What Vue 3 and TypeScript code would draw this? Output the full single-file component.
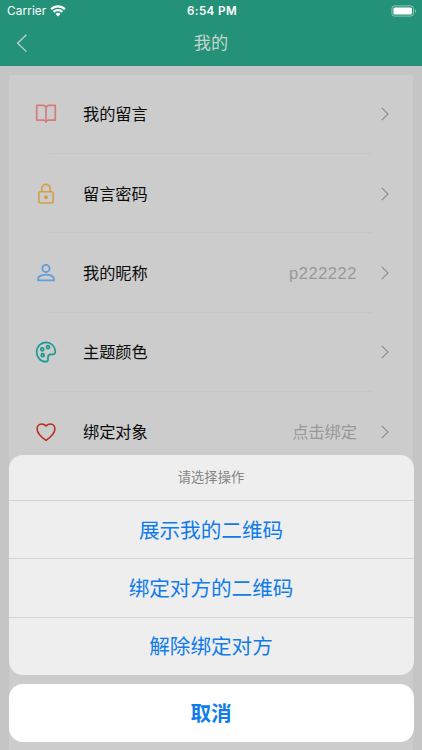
<script setup lang="ts">
interface Row {
  icon: 'book' | 'lock' | 'user' | 'palette' | 'heart'
  label: string
  value?: string
}

const rows: Row[] = [
  { icon: 'book', label: '我的留言' },
  { icon: 'lock', label: '留言密码' },
  { icon: 'user', label: '我的昵称', value: 'p222222' },
  { icon: 'palette', label: '主题颜色' },
  { icon: 'heart', label: '绑定对象', value: '点击绑定' },
]

const actions: string[] = ['展示我的二维码', '绑定对方的二维码', '解除绑定对方']
</script>

<template>
  <div class="screen">
    <header class="header">
      <div class="status">
        <div class="carrier">
          <span>Carrier</span>
          <svg class="wifi" viewBox="0 0 16 12" width="16" height="12">
            <path d="M1.1 4.3a9.8 9.8 0 0 1 13.8 0M3.6 6.9a6.3 6.3 0 0 1 8.8 0" fill="none" stroke="#fff" stroke-width="2.2" />
            <path d="M5.5 8.9a3.6 3.6 0 0 1 5 0L8 11.6z" fill="#fff" />
          </svg>
        </div>
        <span class="time">6:54 PM</span>
        <div class="battery">
          <svg viewBox="0 0 26 12" width="26" height="12">
            <rect x="0.9" y="0.9" width="21.6" height="10.2" rx="2.8" fill="none" stroke="#8fc6b5" />
            <rect x="2.4" y="2.4" width="18.6" height="7.2" rx="1.5" fill="#fff" />
            <path d="M24 4.2v3.6c1.4-.5 1.4-3.1 0-3.6z" fill="#8fc6b5" />
          </svg>
        </div>
      </div>
      <nav class="nav">
        <svg class="back" viewBox="0 0 12 20" width="12" height="20">
          <path d="M10.4 1.8 1.6 10.2l8.8 8.4" fill="none" stroke="#c5d5ce" stroke-width="1.2" />
        </svg>
        <h1>我的</h1>
      </nav>
    </header>

    <main class="card">
      <div v-for="row in rows" :key="row.label" class="row">
        <svg class="icon" viewBox="0 0 22 22" width="22" height="22" fill="none">
          <g v-if="row.icon === 'book'" stroke="#d57b7a" stroke-width="1.7" stroke-linejoin="round">
            <path d="M11 4.2C10.3 3 9.3 2.4 8 2.4H1.7v14.7h6.8c1.3 0 2.1.4 2.5 1.3.4-.9 1.2-1.3 2.5-1.3h6.8V2.4H14c-1.3 0-2.3.6-3 1.8z" />
            <path d="M11 4.2v15.6" />
          </g>
          <g v-else-if="row.icon === 'lock'" stroke="#d59d48" stroke-width="1.6">
            <rect x="3.9" y="8.8" width="14.2" height="11.2" rx="1.3" />
            <path d="M6.8 8.8V5.6a4.2 4.2 0 0 1 8.4 0v3.2" />
            <circle cx="11" cy="14.2" r="2" fill="#d59d48" stroke="none" />
          </g>
          <g v-else-if="row.icon === 'user'" stroke="#5f9fd5" stroke-width="1.8">
            <circle cx="11" cy="6.4" r="3.6" />
            <path d="M3.2 18.3v-1.8c0-2.5 4.8-3.8 7.8-3.8s7.8 1.3 7.8 3.8v1.8z" />
          </g>
          <g v-else-if="row.icon === 'palette'" stroke="#199b93" stroke-width="1.7">
            <path d="M20.3 10.1C19.8 4.9 15.9 1.3 11 1.3c-5.2 0-9.4 4.2-9.4 9.6s4.1 9.8 9.2 9.8c1.4 0 2.2-.9 2.2-2.3v-2.2c0-2 1.1-2.8 3.1-2.8h1.8c1.6 0 2.5-1.2 2.4-3.3z" />
            <circle cx="7.3" cy="8.3" r="1.5" />
            <circle cx="13" cy="6.2" r="1.5" />
            <circle cx="7.7" cy="14.2" r="1.5" />
          </g>
          <path
            v-else
            d="M11 19.3C9.2 18 2.1 13.2 2.1 7.9c0-2.9 2-5 4.6-5 1.9 0 3.3.8 4.3 2 1-1.2 2.4-2 4.3-2 2.6 0 4.6 2.1 4.6 5 0 5.3-7.1 10.1-8.9 11.4z"
            stroke="#b92a1e"
            stroke-width="1.5"
          />
        </svg>
        <span class="label">{{ row.label }}</span>
        <span class="value" :class="{ latin: row.icon === 'user' }">{{ row.value }}</span>
        <svg class="arrow" viewBox="0 0 8 14" width="8" height="14">
          <path d="M.8.9 7 7 .8 13.1" fill="none" stroke="#8c8c8c" stroke-width="1.1" />
        </svg>
      </div>
    </main>

    <section class="sheet">
      <div class="group">
        <p class="title">请选择操作</p>
        <button v-for="action in actions" :key="action" class="action">{{ action }}</button>
      </div>
      <button class="cancel">取消</button>
    </section>
  </div>
</template>

<style>
body {
  margin: 0;
  background: #c5c5c5;
}
</style>

<style scoped>
.screen {
  position: relative;
  box-sizing: border-box;
  height: 750px;
  overflow: hidden;
  background: #c5c5c5;
  font-family: Inter, 'Noto Sans CJK SC', sans-serif;
}
.header {
  height: 65.5px;
  background: #249278;
}
.status {
  display: grid;
  grid-template-columns: 1fr auto 1fr;
  align-items: center;
  height: 22px;
  padding: 0 5px 0 7px;
  color: #fff;
  font-size: 11.8px;
}
.carrier {
  display: flex;
  align-items: center;
  gap: 4px;
  letter-spacing: 0.1px;
}
.wifi {
  margin-top: -1px;
}
.time {
  font-size: 11.6px;
  font-weight: 600;
  letter-spacing: 0.4px;
}
.battery {
  display: flex;
  justify-content: flex-end;
  margin-top: -1px;
}
.nav {
  display: grid;
  grid-template-columns: 1fr auto 1fr;
  align-items: center;
  height: 42px;
  padding: 0 16px;
}
.nav h1 {
  grid-column: 2;
  margin: 0;
  color: #c5d5ce;
  font-size: 17.2px;
  font-weight: 400;
  line-height: 24px;
}
.card {
  height: 676px;
  margin: 9px 9px 0;
  border-radius: 3px;
  background: #cccccc;
}
.row {
  display: flex;
  align-items: center;
  box-sizing: border-box;
  height: 79.4px;
  padding: 0 24px 0 26px;
  background: linear-gradient(#c6c6c6, #c6c6c6) 40px 100% / 323px 1px no-repeat;
}
.label {
  margin-left: 26px;
  color: #0b0b0b;
  font-size: 16.2px;
  line-height: 24px;
}
.value {
  margin-left: auto;
  color: #989898;
  font-family: 'Liberation Sans', 'Noto Sans CJK SC', sans-serif;
  font-size: 16.2px;
  line-height: 24px;
}
.latin {
  font-size: 16.4px;
  letter-spacing: 0.6px;
}
.arrow {
  margin-left: 24px;
}
.sheet {
  position: absolute;
  right: 8.5px;
  bottom: 8.5px;
  left: 8.5px;
  display: flex;
  flex-direction: column;
  gap: 8.5px;
}
.group {
  overflow: hidden;
  border-radius: 14px;
  background: #eeeeee;
}
.title {
  margin: 0;
  color: #858585;
  font-size: 13.3px;
  line-height: 45px;
  text-align: center;
}
button {
  display: block;
  box-sizing: border-box;
  width: 100%;
  padding: 0 0 2px;
  border: 0;
  color: #107bea;
  font-family: inherit;
  font-size: 20.6px;
  text-align: center;
}
.action {
  height: 58.3px;
  border-top: 1px solid #d3d3d3;
  background: transparent;
}
.cancel {
  height: 58px;
  border-radius: 14px;
  background: #fff;
  font-weight: 700;
}
</style>
